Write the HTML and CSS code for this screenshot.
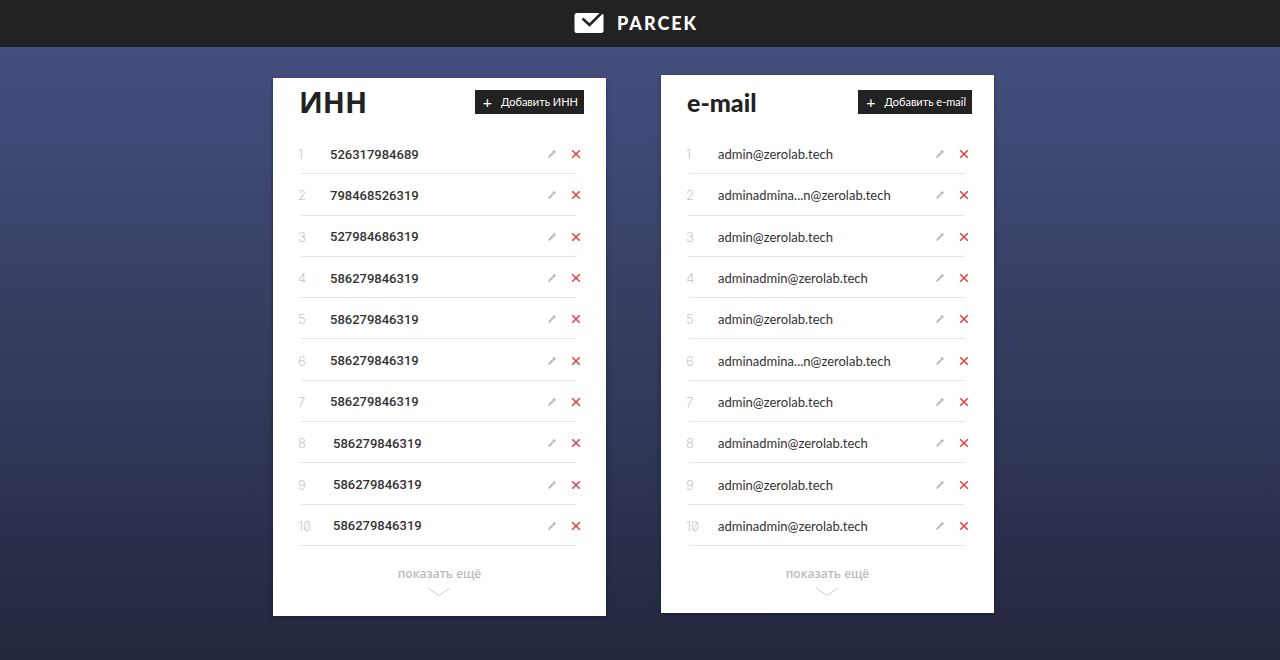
FILE: index.html
```html
<!DOCTYPE html>
<html lang="ru">
<head>
    <meta charset="UTF-8">
    <meta name="viewport" content="width=device-width, initial-scale=1.0">
    <title>Parcek</title>
    <link rel="stylesheet" href="styles.css">
</head>
<body>
    <!-- Shared icons -->
    <svg class="sprite" aria-hidden="true">
        <symbol id="icon-edit" viewBox="0 0 10 10">
            <path d="M1 9l.8-2.300 3.400-3.400 1.500 1.500-3.400 3.400z M5.200 2.800l1.200-1.200c.5-.5 1.100-.5 1.600 0l.4.400c.5.5.5 1.100 0 1.600l-1.200 1.200z"/>
        </symbol>
        <symbol id="icon-delete" viewBox="0 0 10 10">
            <path d="M1.200 1.200l7.600 7.600M8.800 1.200l-7.600 7.600"/>
        </symbol>
        <symbol id="icon-more" viewBox="0 0 24 10">
            <path d="M1 1l11 7.500L23 1"/>
        </symbol>
    </svg>

    <header class="header">
        <a class="logo" href="#">
            <svg class="logo-icon" viewBox="0 0 30 22" aria-hidden="true">
                <rect x="0.500" y="1" width="29" height="20" rx="2.500" fill="#fff"/>
                <path d="M8.500 6.500l7 6.500L28.500 0" fill="none" stroke="#222" stroke-width="2.600"/>
            </svg>
            <span>PARCEK</span>
        </a>
    </header>

    <main class="main">
        <!-- INN -->
        <section class="card">
            <div class="card-head">
                <h1 class="title title-inn">ИНН</h1>
                <button class="add" type="button"><span class="plus">+</span>Добавить ИНН</button>
            </div>
            <ol class="list list-inn">
                <li class="row"><span class="num">1</span><span class="value">526317984689</span><button class="edit" type="button" aria-label="Изменить"><svg><use href="#icon-edit"/></svg></button><button class="delete" type="button" aria-label="Удалить"><svg><use href="#icon-delete"/></svg></button></li>
                <li class="row"><span class="num">2</span><span class="value">798468526319</span><button class="edit" type="button" aria-label="Изменить"><svg><use href="#icon-edit"/></svg></button><button class="delete" type="button" aria-label="Удалить"><svg><use href="#icon-delete"/></svg></button></li>
                <li class="row"><span class="num">3</span><span class="value">527984686319</span><button class="edit" type="button" aria-label="Изменить"><svg><use href="#icon-edit"/></svg></button><button class="delete" type="button" aria-label="Удалить"><svg><use href="#icon-delete"/></svg></button></li>
                <li class="row"><span class="num">4</span><span class="value">586279846319</span><button class="edit" type="button" aria-label="Изменить"><svg><use href="#icon-edit"/></svg></button><button class="delete" type="button" aria-label="Удалить"><svg><use href="#icon-delete"/></svg></button></li>
                <li class="row"><span class="num">5</span><span class="value">586279846319</span><button class="edit" type="button" aria-label="Изменить"><svg><use href="#icon-edit"/></svg></button><button class="delete" type="button" aria-label="Удалить"><svg><use href="#icon-delete"/></svg></button></li>
                <li class="row"><span class="num">6</span><span class="value">586279846319</span><button class="edit" type="button" aria-label="Изменить"><svg><use href="#icon-edit"/></svg></button><button class="delete" type="button" aria-label="Удалить"><svg><use href="#icon-delete"/></svg></button></li>
                <li class="row"><span class="num">7</span><span class="value">586279846319</span><button class="edit" type="button" aria-label="Изменить"><svg><use href="#icon-edit"/></svg></button><button class="delete" type="button" aria-label="Удалить"><svg><use href="#icon-delete"/></svg></button></li>
                <li class="row"><span class="num num-wide">8</span><span class="value">586279846319</span><button class="edit" type="button" aria-label="Изменить"><svg><use href="#icon-edit"/></svg></button><button class="delete" type="button" aria-label="Удалить"><svg><use href="#icon-delete"/></svg></button></li>
                <li class="row"><span class="num num-wide">9</span><span class="value">586279846319</span><button class="edit" type="button" aria-label="Изменить"><svg><use href="#icon-edit"/></svg></button><button class="delete" type="button" aria-label="Удалить"><svg><use href="#icon-delete"/></svg></button></li>
                <li class="row"><span class="num num-wide">10</span><span class="value">586279846319</span><button class="edit" type="button" aria-label="Изменить"><svg><use href="#icon-edit"/></svg></button><button class="delete" type="button" aria-label="Удалить"><svg><use href="#icon-delete"/></svg></button></li>
            </ol>
            <button class="more" type="button">показать ещё<svg><use href="#icon-more"/></svg></button>
        </section>

        <!-- E-mail -->
        <section class="card card-mail">
            <div class="card-head">
                <h2 class="title title-mail">e-mail</h2>
                <button class="add" type="button"><span class="plus">+</span>Добавить e-mail</button>
            </div>
            <ol class="list list-mail">
                <li class="row"><span class="num">1</span><span class="value">admin@zerolab.tech</span><button class="edit" type="button" aria-label="Изменить"><svg><use href="#icon-edit"/></svg></button><button class="delete" type="button" aria-label="Удалить"><svg><use href="#icon-delete"/></svg></button></li>
                <li class="row"><span class="num">2</span><span class="value">adminadmina...n@zerolab.tech</span><button class="edit" type="button" aria-label="Изменить"><svg><use href="#icon-edit"/></svg></button><button class="delete" type="button" aria-label="Удалить"><svg><use href="#icon-delete"/></svg></button></li>
                <li class="row"><span class="num">3</span><span class="value">admin@zerolab.tech</span><button class="edit" type="button" aria-label="Изменить"><svg><use href="#icon-edit"/></svg></button><button class="delete" type="button" aria-label="Удалить"><svg><use href="#icon-delete"/></svg></button></li>
                <li class="row"><span class="num">4</span><span class="value">adminadmin@zerolab.tech</span><button class="edit" type="button" aria-label="Изменить"><svg><use href="#icon-edit"/></svg></button><button class="delete" type="button" aria-label="Удалить"><svg><use href="#icon-delete"/></svg></button></li>
                <li class="row"><span class="num">5</span><span class="value">admin@zerolab.tech</span><button class="edit" type="button" aria-label="Изменить"><svg><use href="#icon-edit"/></svg></button><button class="delete" type="button" aria-label="Удалить"><svg><use href="#icon-delete"/></svg></button></li>
                <li class="row"><span class="num">6</span><span class="value">adminadmina...n@zerolab.tech</span><button class="edit" type="button" aria-label="Изменить"><svg><use href="#icon-edit"/></svg></button><button class="delete" type="button" aria-label="Удалить"><svg><use href="#icon-delete"/></svg></button></li>
                <li class="row"><span class="num">7</span><span class="value">admin@zerolab.tech</span><button class="edit" type="button" aria-label="Изменить"><svg><use href="#icon-edit"/></svg></button><button class="delete" type="button" aria-label="Удалить"><svg><use href="#icon-delete"/></svg></button></li>
                <li class="row"><span class="num">8</span><span class="value">adminadmin@zerolab.tech</span><button class="edit" type="button" aria-label="Изменить"><svg><use href="#icon-edit"/></svg></button><button class="delete" type="button" aria-label="Удалить"><svg><use href="#icon-delete"/></svg></button></li>
                <li class="row"><span class="num">9</span><span class="value">admin@zerolab.tech</span><button class="edit" type="button" aria-label="Изменить"><svg><use href="#icon-edit"/></svg></button><button class="delete" type="button" aria-label="Удалить"><svg><use href="#icon-delete"/></svg></button></li>
                <li class="row"><span class="num">10</span><span class="value">adminadmin@zerolab.tech</span><button class="edit" type="button" aria-label="Изменить"><svg><use href="#icon-edit"/></svg></button><button class="delete" type="button" aria-label="Удалить"><svg><use href="#icon-delete"/></svg></button></li>
            </ol>
            <button class="more" type="button">показать ещё<svg><use href="#icon-more"/></svg></button>
        </section>
    </main>
</body>
</html>
```
FILE: styles.css
```css
* {
    box-sizing: border-box;
}
body {
    margin: 0;
    min-height: 100vh;
    font-family: Lato, "Open Sans", sans-serif;
    color: #222;
    background: linear-gradient(#454f7e 47px, #23283e) no-repeat #23283e;
}
button {
    padding: 0;
    border: none;
    background: none;
    font-family: inherit;
    cursor: pointer;
}
.sprite {
    display: none;
}

/* Header */
.header {
    display: flex;
    justify-content: center;
    align-items: center;
    height: 47px;
    padding: 0 8px 1px 0;
    background: #222;
}
.logo {
    display: flex;
    align-items: center;
    gap: 13px;
    color: #fff;
    font-size: 18px;
    font-weight: 900;
    letter-spacing: 2px;
    text-decoration: none;
}
.logo-icon {
    width: 30px;
    height: 22px;
}

/* Cards */
.main {
    display: flex;
    flex-wrap: wrap;
    justify-content: center;
    align-items: flex-start;
    gap: 28px 55px;
    padding: 28px 13px 28px 0;
}
.card {
    flex: 0 1 333px;
    display: flex;
    flex-direction: column;
    margin-top: 3px;
    padding: 12px 22px 19px 26px;
    background: #fff;
    box-shadow: 0 1px 5px rgba(0, 0, 0, 0.3);
}
.card-mail {
    margin-top: 0;
    padding-top: 15px;
    padding-bottom: 16px;
}
.card-head {
    display: flex;
    justify-content: space-between;
    align-items: flex-start;
    height: 43px;
}
.title {
    margin: 0;
    line-height: 24px;
}
.title-inn {
    font-family: "Open Sans", sans-serif;
    font-size: 29px;
    font-weight: bold;
}
.title-mail {
    font-size: 25px;
    font-weight: 900;
}
.add {
    display: flex;
    align-items: center;
    gap: 9px;
    height: 24px;
    padding: 0 6px 2px 8px;
    background: #222;
    color: #fff;
    font-size: 11px;
}
.plus {
    font-size: 16px;
}

/* Rows */
.list {
    display: grid;
    grid-auto-rows: 1fr;
    min-height: 413px;
    margin: 0 8px 0 2px;
    padding: 0;
    list-style: none;
}
.row {
    display: flex;
    align-items: center;
    padding-top: 2px;
    border-bottom: 1px solid #e4e4e4;
}
.num {
    width: 32px;
    margin-left: -3px;
    color: #c8c8c8;
    font-family: Inter, sans-serif;
    font-size: 13px;
    font-weight: 300;
    font-variant-numeric: slashed-zero;
}
.num-wide {
    width: 35px;
}
.value {
    flex: 1;
    color: #333;
}
.list-inn .value {
    font-family: Roboto, sans-serif;
    font-size: 13px;
    font-weight: 500;
}
.list-mail .value {
    font-size: 13px;
}
.row svg {
    display: block;
    width: 10px;
    height: 10px;
}
.edit {
    margin-right: 14px;
}
.edit svg {
    fill: #bbb;
}
.delete {
    margin-right: -5px;
}
.delete svg {
    fill: none;
    stroke: #e04444;
    stroke-width: 1.6;
}

/* Show more */
.more {
    display: flex;
    flex-direction: column;
    align-items: center;
    align-self: center;
    gap: 4px;
    margin: 19px 4px 0 0;
    color: #bbb;
    font-family: "Open Sans", sans-serif;
    font-size: 12px;
    font-weight: 600;
    line-height: 18px;
}
.more svg {
    width: 24px;
    height: 10px;
    fill: none;
    stroke: #ccc;
}
```
